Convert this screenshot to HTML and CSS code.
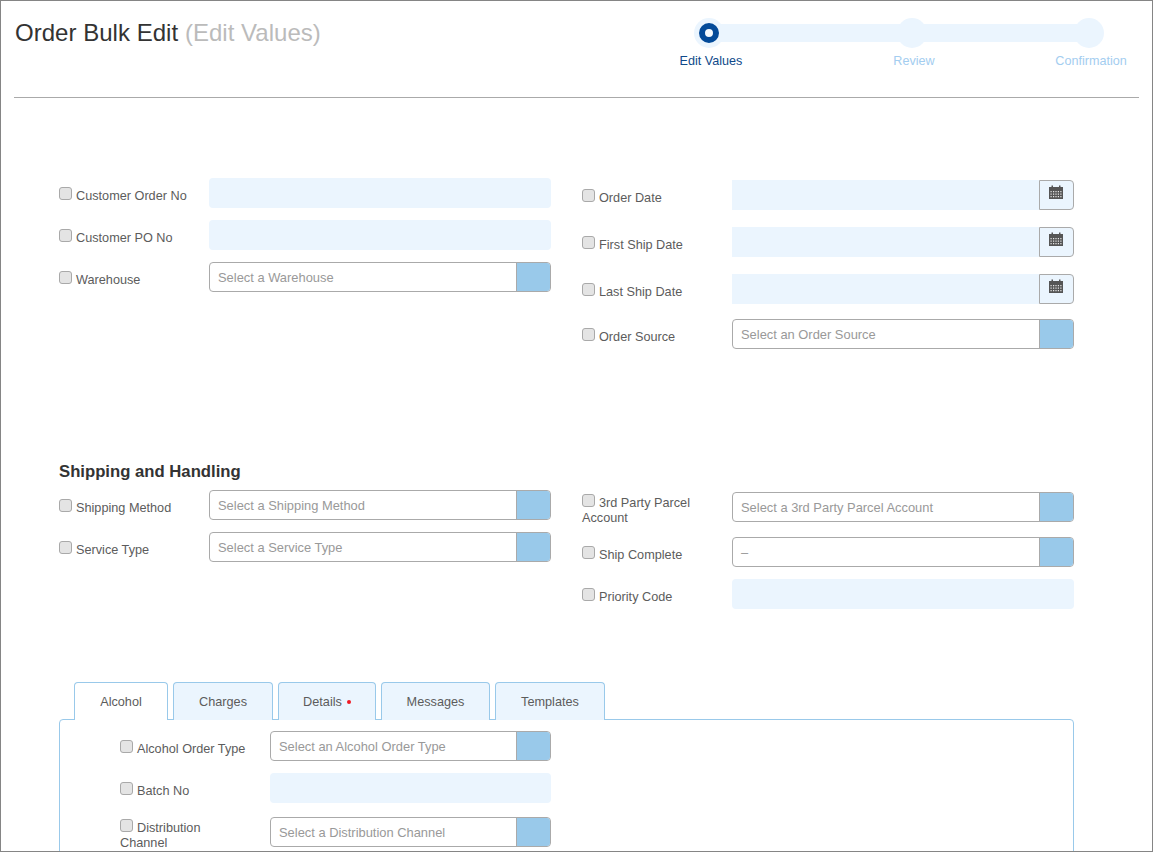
FILE: index.html
```html
<!DOCTYPE html>
<html lang="en">
<head>
<meta charset="utf-8">
<title>Order Bulk Edit</title>
<link rel="stylesheet" href="styles.css">
</head>
<body>
<svg class="sprite" width="0" height="0" aria-hidden="true">
  <symbol id="cal" viewBox="0 0 14 14">
    <path fill="#555" d="M0 2h2.500V0.500h1.500V2h6V0.500h1.500V2H14v12H0z"/>
    <path fill="#e6e6e6" d="M1.500 6h1.200v1.300H1.500zM4 6h1.200v1.300H4zM6.400 6h1.200v1.300H6.400zM8.800 6h1.200v1.300H8.800zM11.300 6h1.200v1.300h-1.200zM1.500 8.500h1.200v1.300H1.500zM4 8.500h1.200v1.300H4zM6.400 8.500h1.200v1.300H6.400zM8.800 8.500h1.200v1.300H8.800zM11.300 8.500h1.200v1.300h-1.200zM1.500 11h1.200v1.300H1.500zM4 11h1.200v1.300H4zM6.400 11h1.200v1.300H6.400zM8.800 11h1.200v1.300H8.800zM11.300 11h1.200v1.300h-1.200z"/>
  </symbol>
</svg>
<div class="page">
  <header class="head">
    <h1 class="title">Order Bulk Edit <span class="title-sub">(Edit Values)</span></h1>
    <div class="stepper">
      <div class="track"></div>
      <div class="step step-active"><span class="dot"><span class="dot-core"></span></span><span class="step-label">Edit Values</span></div>
      <div class="step step-two"><span class="dot"></span><span class="step-label">Review</span></div>
      <div class="step step-three"><span class="dot"></span><span class="step-label">Confirmation</span></div>
    </div>
  </header>

  <section class="columns first">
    <div class="col">
      <div class="row"><label class="lab"><input type="checkbox" class="cb">Customer Order No</label><input class="field" type="text"></div>
      <div class="row"><label class="lab"><input type="checkbox" class="cb">Customer PO No</label><input class="field" type="text"></div>
      <div class="row"><label class="lab"><input type="checkbox" class="cb">Warehouse</label><div class="select"><span class="select-text">Select a Warehouse</span><span class="select-btn"></span></div></div>
    </div>
    <div class="col col-right">
      <div class="row gap-17"><label class="lab"><input type="checkbox" class="cb">Order Date</label><div class="date"><input class="date-field" type="text"><span class="date-btn"><svg class="cal" width="14" height="14"><use href="#cal"/></svg></span></div></div>
      <div class="row gap-17"><label class="lab"><input type="checkbox" class="cb">First Ship Date</label><div class="date"><input class="date-field" type="text"><span class="date-btn"><svg class="cal" width="14" height="14"><use href="#cal"/></svg></span></div></div>
      <div class="row gap-15"><label class="lab"><input type="checkbox" class="cb">Last Ship Date</label><div class="date"><input class="date-field" type="text"><span class="date-btn"><svg class="cal" width="14" height="14"><use href="#cal"/></svg></span></div></div>
      <div class="row"><label class="lab"><input type="checkbox" class="cb">Order Source</label><div class="select"><span class="select-text">Select an Order Source</span><span class="select-btn"></span></div></div>
    </div>
  </section>

  <h2 class="section-title">Shipping and Handling</h2>
  <section class="columns">
    <div class="col">
      <div class="row"><label class="lab"><input type="checkbox" class="cb">Shipping Method</label><div class="select"><span class="select-text">Select a Shipping Method</span><span class="select-btn"></span></div></div>
      <div class="row"><label class="lab"><input type="checkbox" class="cb">Service Type</label><div class="select"><span class="select-text">Select a Service Type</span><span class="select-btn"></span></div></div>
    </div>
    <div class="col col-right">
      <div class="row gap-15"><label class="lab lab-wrap"><input type="checkbox" class="cb">3rd Party Parcel Account</label><div class="select"><span class="select-text">Select a 3rd Party Parcel Account</span><span class="select-btn"></span></div></div>
      <div class="row"><label class="lab"><input type="checkbox" class="cb">Ship Complete</label><div class="select"><span class="select-text">–</span><span class="select-btn"></span></div></div>
      <div class="row"><label class="lab"><input type="checkbox" class="cb">Priority Code</label><input class="field" type="text"></div>
    </div>
  </section>

  <nav class="tabs">
    <span class="tab tab-active tab-alcohol">Alcohol</span>
    <span class="tab tab-charges">Charges</span>
    <span class="tab tab-details">Details<span class="req"></span></span>
    <span class="tab tab-messages">Messages</span>
    <span class="tab tab-templates">Templates</span>
  </nav>
  <section class="panel">
    <div class="panel-col">
      <div class="row"><label class="lab"><input type="checkbox" class="cb">Alcohol Order Type</label><div class="select"><span class="select-text">Select an Alcohol Order Type</span><span class="select-btn"></span></div></div>
      <div class="row gap-14"><label class="lab"><input type="checkbox" class="cb">Batch No</label><input class="field" type="text"></div>
      <div class="row"><label class="lab lab-wrap lab-narrow"><input type="checkbox" class="cb">Distribution Channel</label><div class="select"><span class="select-text">Select a Distribution Channel</span><span class="select-btn"></span></div></div>
    </div>
  </section>
</div>
</body>
</html>
```

FILE: styles.css
```css
* { box-sizing: border-box; }
html, body { margin: 0; padding: 0; }
body { font-family: "Liberation Sans", Arial, sans-serif; color: #555; background: #fff; }
.sprite { position: absolute; }
.page { width: 1153px; height: 852px; border: 1px solid #858585; padding: 0 13px; overflow: hidden; background: #fff; }

.head { height: 97px; border-bottom: 1px solid #aaa; display: flex; justify-content: space-between; padding-right: 8px; }
.title { margin: 17px 0 0 1px; font-size: 24px; line-height: 30px; font-weight: 400; color: #333; letter-spacing: 0.03px; }
.title-sub { color: #bbb; }

.stepper { position: relative; display: flex; margin-top: 17px; height: 60px; }
.track { position: absolute; left: 38px; top: 6px; width: 380px; height: 18px; background: #ebf5fe; }
.step { position: relative; width: 80px; display: flex; flex-direction: column; align-items: center; }
.step-two { margin-left: 123px; }
.step-three { margin-left: 97px; }
.dot { width: 30px; height: 30px; margin-right: 4px; border-radius: 50%; background: #ebf5fe; display: flex; align-items: center; justify-content: center; }
.dot-core { width: 20px; height: 20px; border-radius: 50%; border: 6px solid #034a99; background: #f4f9fe; }
.step-label { margin-top: 6px; font-size: 12.6px; line-height: 15px; white-space: nowrap; color: #a3cdf0; }
.step-active .step-label { color: #0f4a8a; }

.columns { display: grid; grid-template-columns: 492px 492px; column-gap: 31px; margin-left: 45px; }
.first { margin-top: 80px; min-height: 171px; }
.col-right { padding-top: 2px; }

.section-title { margin: 102px 0 9px 45px; font-size: 16.7px; line-height: 18px; font-weight: 700; color: #333; }

.row { display: flex; align-items: flex-start; margin-bottom: 12px; }
.gap-17 { margin-bottom: 17px; }
.gap-15 { margin-bottom: 15px; }
.gap-14 { margin-bottom: 14px; }

.lab { display: block; width: 150px; flex: none; padding: 9px 0 0 0; font-size: 12.7px; line-height: 15px; color: #5c5c5c; }
.lab-wrap { height: 30px; padding: 2px 30px 0 0; }
.cb { appearance: none; -webkit-appearance: none; width: 13px; height: 13px; margin: 0 4px 0 0; border: 1px solid #a9a9a9; border-radius: 3px; background: #e4e4e4; }

.field { flex: 1; height: 30px; min-width: 0; border: 0; border-radius: 4px; background: #ebf5fe; padding: 0 8px; }

.select { flex: 1; height: 30px; display: flex; border: 1px solid #aaa; border-radius: 4px; overflow: hidden; background: #fff; }
.select-text { flex: 1; padding-left: 8px; font-size: 12.9px; line-height: 29px; color: #999; white-space: nowrap; }
.select-btn { width: 34px; flex: none; background: #99c9ea; border-left: 1px solid #aaa; }

.date { flex: 1; height: 30px; display: flex; }
.date-field { flex: 1; min-width: 0; border: 0; background: #ebf5fe; padding: 0 8px; }
.date-btn { width: 35px; flex: none; display: flex; justify-content: center; padding: 4px 1px 0 0; background: #ebf5fe; border: 1px solid #aaa; border-radius: 0 4px 4px 0; }
.cal { display: block; }

.tabs { display: flex; margin: 61px 0 -1px 60px; position: relative; }
.tab { height: 38px; margin-right: 5px; border: 1px solid #99c9ea; border-bottom: 0; border-radius: 4px 4px 0 0; background: #ebf5fe; font-size: 12.7px; line-height: 38px; text-align: center; color: #5c5c5c; }
.tab-active { background: #fff; }
.tab-alcohol { width: 94px; }
.tab-charges { width: 100px; }
.tab-details { width: 98px; }
.tab-messages { width: 109px; }
.tab-templates { width: 110px; }
.req { display: inline-block; width: 4px; height: 4px; margin-left: 5px; border-radius: 50%; background: #f01824; vertical-align: 2px; }

.panel { margin-left: 45px; width: 1015px; height: 200px; border: 1px solid #99c9ea; border-radius: 4px; padding: 11px 0 0 60px; }
.panel-col { width: 431px; }
.lab-narrow { padding-right: 40px; }
```
